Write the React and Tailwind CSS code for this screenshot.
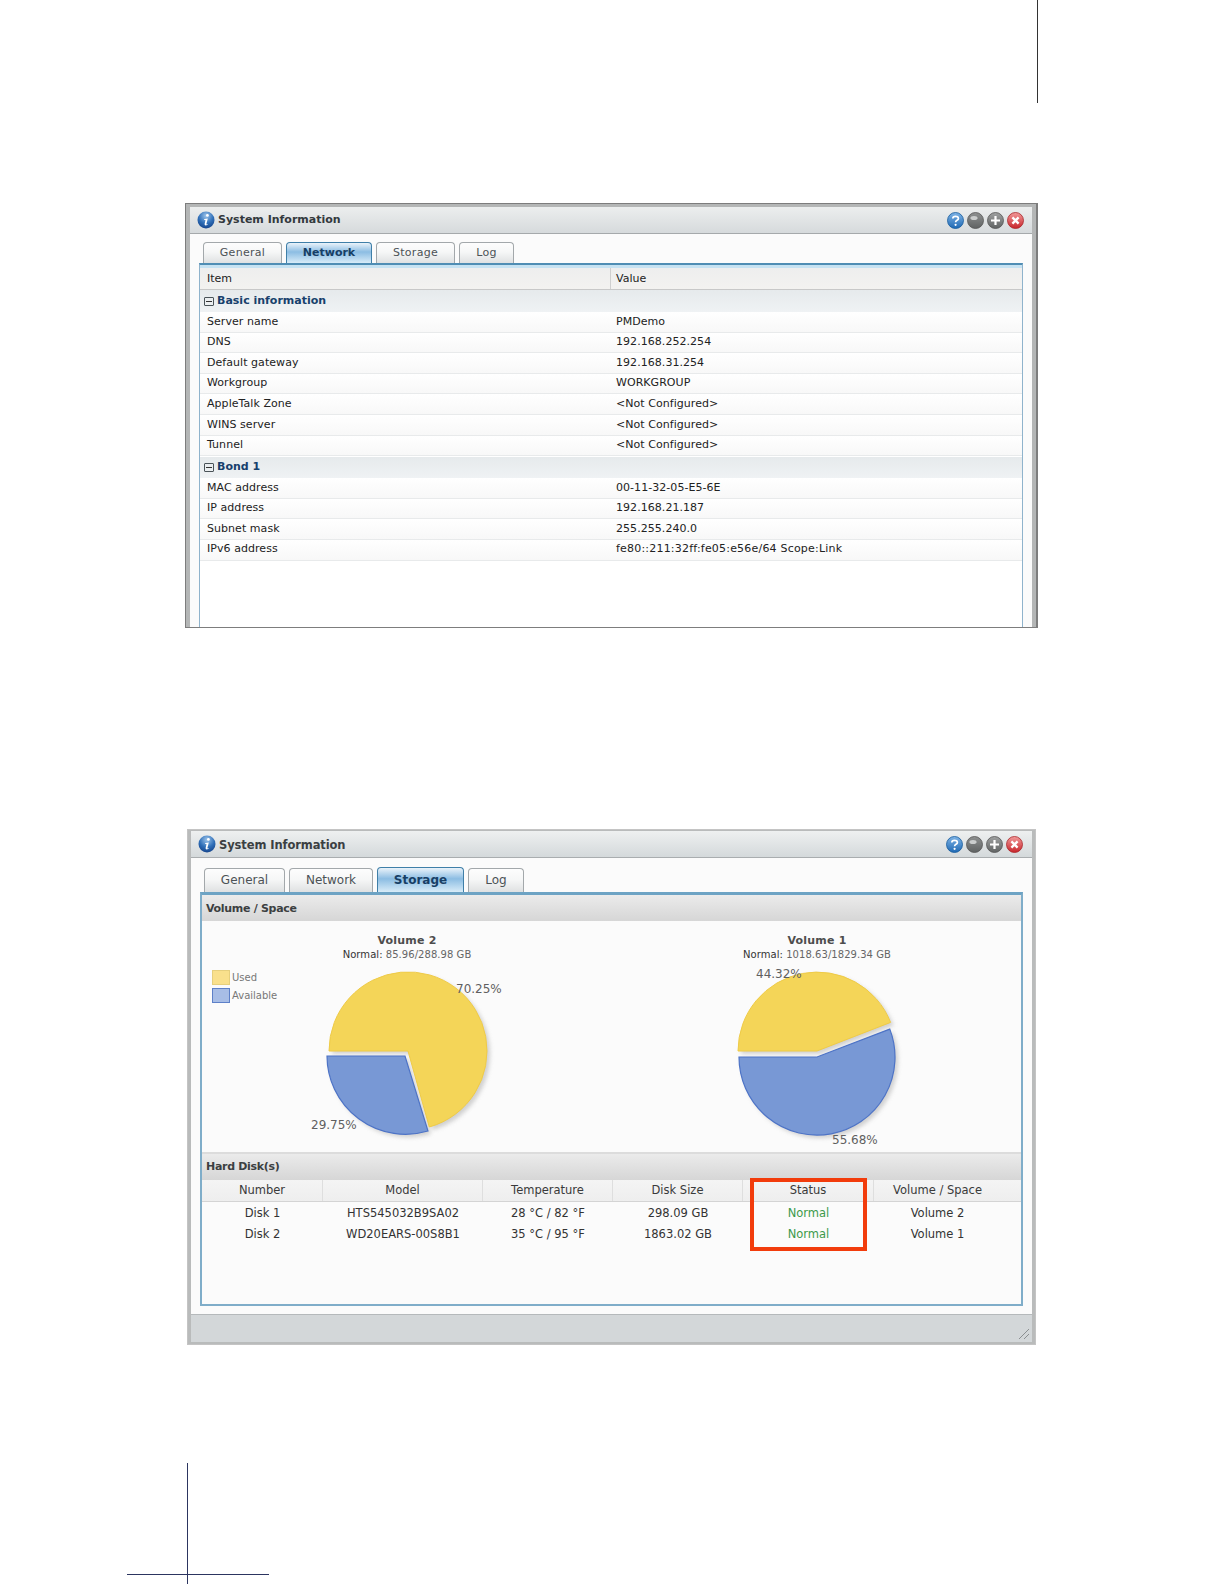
const font = "[font-family:'DejaVu_Sans',sans-serif]";

function InfoIcon({ size = 18 }) {
  return (
    <svg width={size} height={size} viewBox="0 0 18 18" className="shrink-0">
      <defs>
        <radialGradient id="ig" cx="50%" cy="25%" r="80%">
          <stop offset="0" stopColor="#9cc4ea" />
          <stop offset="0.55" stopColor="#2f6fb8" />
          <stop offset="1" stopColor="#123f86" />
        </radialGradient>
      </defs>
      <circle cx="9" cy="9" r="8.5" fill="url(#ig)" />
      <circle cx="10.4" cy="4.4" r="1.4" fill="#fff" />
      <path d="M7.2 8 L10.8 7.4 L9.4 13 Q9.3 13.8 10.6 13 L10.6 13.8 Q7.4 15.4 7.6 13 L8.5 9 L7.2 9 Z" fill="#fff" />
    </svg>
  );
}

function WinButton({ kind, size = 17 }) {
  const colors = {
    help: ["#7fb4e6", "#1f69b4", "#155a9c"],
    min: ["#8f9191", "#5f6262", "#555"],
    max: ["#a0a2a2", "#606363", "#555"],
    close: ["#f29a9a", "#c8252b", "#a8262a"],
  }[kind];
  const id = "wb-" + kind + size;
  return (
    <svg width={size} height={size} viewBox="0 0 17 17" className="shrink-0">
      <defs>
        <linearGradient id={id} x1="0" y1="0" x2="0" y2="1">
          <stop offset="0" stopColor={colors[0]} />
          <stop offset="1" stopColor={colors[1]} />
        </linearGradient>
      </defs>
      <circle cx="8.5" cy="8.5" r="8" fill={`url(#${id})`} stroke={colors[2]} strokeWidth="0.8" />
      {kind === "help" && (
        <path d="M5.8 6.4 C5.8 3.6 11.4 3.6 11.4 6.4 C11.4 8.4 8.6 8.2 8.6 10.2" fill="none" stroke="#fff" strokeWidth="1.7" />
      )}
      {kind === "help" && <circle cx="8.6" cy="12.8" r="1.1" fill="#fff" />}
      {kind === "min" && <ellipse cx="7" cy="6" rx="3.6" ry="2" fill="#d8dada" opacity="0.85" />}
      {kind === "max" && <path d="M8.5 4 V13 M4 8.5 H13" stroke="#fff" strokeWidth="2.2" />}
      {kind === "close" && <path d="M5.4 5.4 L11.6 11.6 M11.6 5.4 L5.4 11.6" stroke="#fff" strokeWidth="2.3" />}
    </svg>
  );
}

function TitleBar({ big }) {
  return (
    <div className={big
      ? "h-[27px] shrink-0 flex items-center pl-[7px] pr-[9px] bg-[linear-gradient(#eef0f0,#d4d9db)] border-b border-[#a9adaf]"
      : "h-[27px] shrink-0 flex items-center pl-[7px] pr-[8px] bg-[linear-gradient(#eceeee,#d6dadc)] border-b border-[#a5a9ab]"}>
      <InfoIcon />
      <span className={big
        ? "ml-[3px] mt-[3px] text-[11.5px] font-bold text-[#3b3f42] tracking-[-0.1px]"
        : "ml-[3px] text-[11px] font-bold text-[#33393d]"}>System Information</span>
      <div className="ml-auto flex items-center gap-[3px]">
        <WinButton kind="help" />
        <WinButton kind="min" />
        <WinButton kind="max" />
        <WinButton kind="close" />
      </div>
    </div>
  );
}

function Tab({ label, active, w, h, big }) {
  const size = big ? "text-[12px] pb-[1px] " : "text-[11px] ";
  const spacing = big ? "" : " tracking-[0.3px]";
  return (
    <div
      className={
        "rounded-t-[4px] border border-b-0 flex items-center justify-center " + size + w + " " + h + " " +
        (active
          ? "border-[#3f7fa8] font-bold text-[#173f66] bg-[linear-gradient(#eaf3fa,#8cbde3_45%,#d8ecf8)]"
          : "border-[#a3a8ab] text-[#4c5256] bg-[linear-gradient(#fdfdfd,#f6f7f7_45%,#dfe1e2)]" + spacing)
      }
    >
      {label}
    </div>
  );
}

function Group({ label, cls }) {
  return (
    <div className={"shrink-0 flex items-center pl-[4px] bg-[linear-gradient(#e6eaec,#eff2f4)] " + cls}>
      <span className="w-[10px] h-[9px] border border-[#4a5358] rounded-[1px] flex items-center justify-center">
        <span className="w-[6px] h-px bg-[#333]" />
      </span>
      <span className="ml-[3px] text-[11px] font-bold text-[#17406c]">{label}</span>
    </div>
  );
}

function Row({ a, b, wide }) {
  return (
    <div className="h-[20.6px] shrink-0 flex items-center border-b border-[#e8eaeb] text-[11px] text-[#222] tracking-[0.05px] bg-[linear-gradient(#fff,#f8f8f8)]">
      <span className="w-[411px] pl-[7px] shrink-0">{a}</span>
      <span className={wide ? "pl-[5px] tracking-[0.2px]" : "pl-[5px]"}>{b}</span>
    </div>
  );
}

function NetworkWindow() {
  const basic = [
    ["Server name", "PMDemo"],
    ["DNS", "192.168.252.254"],
    ["Default gateway", "192.168.31.254"],
    ["Workgroup", "WORKGROUP"],
    ["AppleTalk Zone", "<Not Configured>"],
    ["WINS server", "<Not Configured>"],
    ["Tunnel", "<Not Configured>"],
  ];
  const bond = [
    ["MAC address", "00-11-32-05-E5-6E"],
    ["IP address", "192.168.21.187"],
    ["Subnet mask", "255.255.240.0"],
    ["IPv6 address", "fe80::211:32ff:fe05:e56e/64 Scope:Link", true],
  ];
  return (
    <div className="mt-[100px] ml-[185px] w-[853px] h-[425px] shrink-0 border border-[#7d7d7d] border-r-2 bg-[#b4b6b6] pt-[3px] pl-[4px] pr-[4px] flex flex-col">
      <div className="flex-1 min-h-0 bg-[#fbfbfb] flex flex-col">
        <TitleBar />
        <div className="flex-1 min-h-0 pl-[9px] pr-[9px] pt-[8px] flex flex-col">
          <div className="flex gap-[4px] pl-[4px] items-end shrink-0">
            <Tab label="General" w="w-[79px]" h="h-[21px]" />
            <Tab label="Network" active w="w-[86px]" h="h-[21px]" />
            <Tab label="Storage" w="w-[79px]" h="h-[21px]" />
            <Tab label="Log" w="w-[55px]" h="h-[21px]" />
          </div>
          <div className="flex-1 min-h-0 border-x border-t-2 border-[#4f8db4] border-x-[#8fb3cc] bg-white flex flex-col">
            <div className="h-[3px] shrink-0 bg-[#c6e2f2]" />
            <div className="h-[22px] shrink-0 flex items-center text-[11px] text-[#222] bg-[linear-gradient(#eeeeee,#f3f2f0)] border-b border-[#c8c8c8]">
              <span className="w-[411px] pl-[7px] pt-[1px] border-r border-[#cfcfcf] h-full flex items-center shrink-0">Item</span>
              <span className="pl-[5px] pt-[1px]">Value</span>
            </div>
            <Group label="Basic information" cls="h-[22px]" />
            {basic.map(([a, b]) => <Row key={a} a={a} b={b} />)}
            <Group label="Bond 1" cls="h-[21px] mt-[1px]" />
            {bond.map(([a, b, w]) => <Row key={a} a={a} b={b} wide={w} />)}
          </div>
        </div>
      </div>
    </div>
  );
}

function Pie({ yellow, blue, yId }) {
  return (
    <svg width="190" height="180" viewBox="0 0 190 180" className="block">
      <defs>
        <filter id={yId} x="-20%" y="-20%" width="140%" height="140%">
          <feGaussianBlur stdDeviation="2" />
        </filter>
      </defs>
      <path d={yellow} fill="#bdbdbd" opacity="0.7" filter={`url(#${yId})`} transform="translate(3 3)" />
      <path d={blue} fill="#bdbdbd" opacity="0.7" filter={`url(#${yId})`} transform="translate(3 3)" />
      <path d={yellow} fill="#f4d558" stroke="#efcb47" strokeWidth="1" />
      <path d={blue} fill="#7898d5" stroke="#4d73c6" strokeWidth="1.2" />
    </svg>
  );
}

function SectionHead({ children, cls }) {
  return (
    <div className={"shrink-0 flex items-center pl-[4px] text-[11px] tracking-[-0.3px] font-bold text-[#3c3f41] bg-[linear-gradient(#ebebeb,#d6d6d6)] " + cls}>
      {children}
    </div>
  );
}

const cols = "grid grid-cols-[121px_160px_130px_130px_131px_1fr]";

function Volume({ title, detailA, detailB, children }) {
  return (
    <div className="w-[410px] h-[231px] shrink-0 relative flex flex-col items-center pt-[12px]">
      <div className="text-[11px] leading-[15px] font-bold text-[#4d4d4d] tracking-[0.2px]">{title}</div>
      <div className="text-[10px] leading-[14px] text-[#666] tracking-[0.05px]">
        <span className="text-[#333]">{detailA}</span>{detailB}
      </div>
      {children}
    </div>
  );
}

function Pct({ cls, children }) {
  return <span className={"absolute text-[12px] leading-[15px] text-[#5f5f5f] " + cls}>{children}</span>;
}

function StorageWindow() {
  const headers = ["Number", "Model", "Temperature", "Disk Size", "Status", "Volume / Space"];
  const rows = [
    ["Disk 1", "HTS545032B9SA02", "28 °C / 82 °F", "298.09 GB", "Normal", "Volume 2"],
    ["Disk 2", "WD20EARS-00S8B1", "35 °C / 95 °F", "1863.02 GB", "Normal", "Volume 1"],
  ];
  return (
    <div className="mt-[201px] ml-[187px] w-[849px] h-[516px] shrink-0 border border-[#c4c4c4] bg-[#b9bbbb] pt-[1px] px-[3px] pb-[2px] flex flex-col">
      <div className="flex-1 min-h-0 bg-[#fbfbfb] flex flex-col">
        <TitleBar big />
        <div className="shrink-0 pl-[9px] pr-[9px] pt-[9px] flex flex-col">
          <div className="flex gap-[4px] pl-[4px] items-end shrink-0">
            <Tab big label="General" w="w-[81px]" h="h-[24px]" />
            <Tab big label="Network" w="w-[84px]" h="h-[24px]" />
            <Tab big label="Storage" active w="w-[87px]" h="h-[25px]" />
            <Tab big label="Log" w="w-[56px]" h="h-[24px]" />
          </div>
          <div className="h-[414px] shrink-0 border-2 border-t-[3px] border-[#7fadc9] border-t-[#6da3c4] bg-[#fbfbfb] flex flex-col relative">
            <SectionHead cls="h-[26px] pt-[3px]">Volume / Space</SectionHead>
            <div className="flex shrink-0">
              <Volume title="Volume 2" detailA="Normal:" detailB=" 85.96/288.98 GB">
                <div className="absolute left-[10px] top-[48px] flex flex-col gap-[1px]">
                  <div className="flex items-center gap-[2px] text-[10px] leading-[17px] text-[#777]">
                    <span className="w-[18px] h-[15px] bg-[#f9e08c] border border-[#e6cf7d]" />Used
                  </div>
                  <div className="flex items-center gap-[2px] text-[10px] leading-[17px] text-[#777]">
                    <span className="w-[18px] h-[15px] bg-[#a7bde6] border border-[#5d80c8]" />Available
                  </div>
                </div>
                <div className="absolute left-[109px] top-[46px]">
                  <Pie
                    yId="s1"
                    yellow="M18 84 A79 79 0 1 1 118.3 160 L97 84 Z"
                    blue="M16 89 L94 89 L117 164 A78.5 78.5 0 0 1 16 89 Z"
                  />
                </div>
                <Pct cls="left-[254px] top-[61px]">70.25%</Pct>
                <Pct cls="left-[109px] top-[197px]">29.75%</Pct>
              </Volume>
              <Volume title="Volume 1" detailA="Normal:" detailB=" 1018.63/1829.34 GB">
                <div className="absolute left-[109px] top-[46px]">
                  <Pie
                    yId="s2"
                    yellow="M17 84 A79 79 0 0 1 169.6 55.4 L96 84 Z"
                    blue="M18 90 L96 90 L168.8 62.1 A78 78 0 1 1 18 90 Z"
                  />
                </div>
                <Pct cls="left-[144px] top-[46px]">44.32%</Pct>
                <Pct cls="left-[220px] top-[212px]">55.68%</Pct>
              </Volume>
            </div>
            <div className="h-[2px] shrink-0 bg-[#dcdcdc]" />
            <SectionHead cls="h-[26px]">Hard Disk(s)</SectionHead>
            <div className={cols + " h-[22px] shrink-0 items-center text-center text-[11.5px] text-[#3a3a3a] bg-[linear-gradient(#f4f4f4,#eeeeee)] border-b border-[#d4d4d4]"}>
              {headers.map((h, i) => (
                <span key={h} className={"h-full flex items-center justify-center " + (i < 5 ? "border-r border-[#dedede]" : "pr-[20px]")}>{h}</span>
              ))}
            </div>
            <div className="pt-[1px]">
              {rows.map((r) => (
                <div key={r[0]} className={cols + " h-[21px] items-center text-center text-[11.5px] text-[#333]"}>
                  {r.map((c, i) => (
                    <span key={i} className={i === 4 ? "text-[#3b9a4a]" : i === 5 ? "pr-[20px]" : ""}>{c}</span>
                  ))}
                </div>
              ))}
            </div>
            <div className="absolute left-[548px] top-[283px] w-[117px] h-[73px] border-[4px] border-[#f23c0c]" />
          </div>
        </div>
        <div className="mt-[8px] flex-1 flex justify-end items-end bg-[#d3d7d9] border-t border-[#b5b9bb] pr-[2px] pb-[2px]">
          <svg width="12" height="12" viewBox="0 0 12 12">
            <path d="M1 11 L11 1 M6 11 L11 6" stroke="#8b8f91" strokeWidth="1" />
          </svg>
        </div>
      </div>
    </div>
  );
}

export default function App() {
  return (
    <div className={"w-[1224px] h-[1584px] bg-white flex flex-col overflow-hidden " + font}>
      <div className="ml-[1037px] w-px h-[103px] shrink-0 bg-[#333]" />
      <NetworkWindow />
      <StorageWindow />
      <div className="mt-[118px] ml-[187px] w-px h-[111px] shrink-0 bg-[#2c3560]" />
      <div className="ml-[127px] w-[142px] h-px shrink-0 bg-[#2c3560]" />
      <div className="ml-[187px] w-px flex-1 bg-[#2c3560]" />
    </div>
  );
}
